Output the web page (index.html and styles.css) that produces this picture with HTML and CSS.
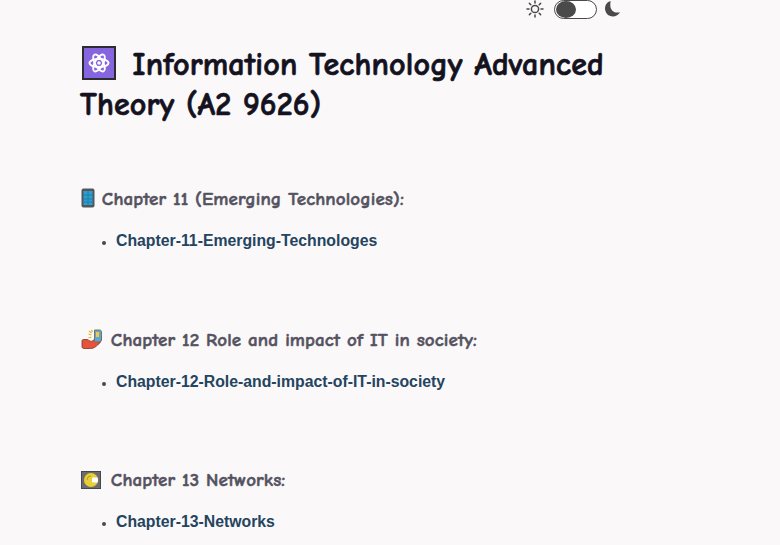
FILE: index.html
```html
<!DOCTYPE html>
<html lang="en">
<head>
<meta charset="UTF-8">
<meta name="viewport" content="width=device-width, initial-scale=1.0">
<title>Information Technology Advanced Theory</title>
<link rel="stylesheet" href="styles.css">
</head>
<body>
    <main class="page">
        <div class="theme-switch">
            <svg class="sun" width="18" height="18" viewBox="0 0 18 18" fill="none" stroke="#4a4a4a" stroke-width="1.5" stroke-linecap="round">
                <circle cx="9" cy="9" r="3.6"/>
                <path d="M9 1v2M9 15v2M1 9h2M15 9h2M3.4 3.4l1.4 1.4M13.2 13.2l1.4 1.4M3.4 14.6l1.4-1.4M13.2 4.8l1.4-1.4"/>
            </svg>
            <span class="toggle"><span class="knob"></span></span>
            <svg class="moon" width="17" height="18" viewBox="0 0 17 18">
                <path fill="#4a4a4a" d="M6.6 1C3.2 2 1 4.900 1 8.500c0 4.400 3.500 8 7.900 8 3 0 5.700-1.700 7.100-4.300-.8.300-1.600.4-2.400.4-4.200 0-7.300-3.100-7.300-7.200 0-1.600.1-3 .3-4.400z"/>
            </svg>
        </div>

        <h1 class="title">
            <svg class="emoji-title" width="34" height="34" viewBox="0 0 34 34">
                <rect x="1" y="1" width="32" height="32" fill="#8566de" stroke="#2c2c33" stroke-width="2"/>
                <g fill="none" stroke="#fff" stroke-width="1.900">
                    <ellipse cx="17" cy="17" rx="9.500" ry="4"/>
                    <ellipse cx="17" cy="17" rx="9.500" ry="4" transform="rotate(60 17 17)"/>
                    <ellipse cx="17" cy="17" rx="9.500" ry="4" transform="rotate(120 17 17)"/>
                </g>
                <circle cx="17" cy="17" r="1.800" fill="#fff"/>
            </svg>
            Information Technology Advanced Theory (A2 9626)
        </h1>

        <section class="chapter chapter-first">
            <h3 class="chapter-title">
                <svg class="emoji" width="14" height="20" viewBox="0 0 14 20">
                    <rect x="0.500" y="0.500" width="13" height="19" rx="2" fill="#55555b"/>
                    <rect x="2.500" y="3" width="9" height="14" fill="#2b9fd0"/>
                    <path d="M2.500 7h9M2.500 11h9M2.500 14h9M7 3v14" stroke="#1d7aa6" stroke-width="0.800"/>
                </svg>
                Chapter 11 (Emerging Technologies):
            </h3>
            <ul class="links">
                <li><a href="#">Chapter-11-Emerging-Technologes</a></li>
            </ul>
        </section>

        <section class="chapter">
            <h3 class="chapter-title">
                <svg class="emoji emoji-hand" width="22" height="20" viewBox="0 0 22 20">
                    <path d="M1 12c0-1 .7-1.500 1.500-1.500h4c1 0 1 .8 1.500 1.200 2 1 3.500.5 4.500-.7l4-1 4-2c.2 4-1.500 6.500-4 8-2 2-4 3.500-7 3.500H3c-1.300 0-2-.8-2-2z" fill="#e8523a" stroke="#6b3a2a" stroke-width="0.800"/>
                    <path d="M13.500 1h5c1.200 0 2 .8 2 2v7c0 1.500-1 3-2.500 3h-3c-1 0-1.500-.5-1.500-1.500z" fill="#5aa7d8" stroke="#7a6a3c" stroke-width="0.900"/>
                    <path d="M15 3h3v5h-3z" fill="#f2c84b"/>
                    <path d="M8 2l2.500 2M7.500 5l3 1M7.500 9l3-1M10.500 1l1 2" stroke="#e0b92e" stroke-width="1.300"/>
                </svg>
                Chapter 12 Role and impact of IT in society:
            </h3>
            <ul class="links">
                <li><a href="#">Chapter-12-Role-and-impact-of-IT-in-society</a></li>
            </ul>
        </section>

        <section class="chapter">
            <h3 class="chapter-title">
                <svg class="emoji emoji-disc" width="20" height="18" viewBox="0 0 20 18">
                    <rect x="0.500" y="0.500" width="19" height="17" fill="#6c6c70" stroke="#47474b"/>
                    <circle cx="10" cy="9" r="7" fill="#e8cf36"/>
                    <path d="M6 9a4 4 0 0 1 4-4" fill="none" stroke="#b79f1c"/>
                    <rect x="11" y="6.500" width="6" height="5" rx="1" fill="#fff"/>
                </svg>
                Chapter 13 Networks:
            </h3>
            <ul class="links">
                <li><a href="#">Chapter-13-Networks</a></li>
            </ul>
        </section>
    </main>
</body>
</html>
```

FILE: styles.css
```css
html, body {
    height: 100%;
    overflow: hidden;
}
body {
    margin: 0;
    background-color: #faf8f9;
    font-family: "Liberation Sans", Arial, sans-serif;
}
.page {
    width: 541px;
    margin-left: 80px;
}
.theme-switch {
    display: flex;
    justify-content: flex-end;
    align-items: center;
    gap: 7px;
    height: 18px;
}
.sun {
    margin-right: 3px;
}
.toggle {
    display: block;
    box-sizing: border-box;
    width: 43px;
    height: 19px;
    padding: 0 0 0 1px;
    border: 1px solid #4a4a4a;
    border-radius: 10px;
    background-color: #fff;
}
.knob {
    display: block;
    width: 20px;
    height: 17px;
    border-radius: 50%;
    background-color: #4a4a4a;
}
.title {
    margin: 27px 0 0;
    font-family: "Comic Sans MS", "Comic Neue", "DejaVu Sans", sans-serif;
    font-size: 32px;
    font-weight: 700;
    line-height: 40px;
    letter-spacing: 0.15px;
    -webkit-text-stroke: 0.7px #14121f;
    color: #14121f;
}
.emoji-title {
    vertical-align: -5px;
    margin-left: 2px;
    margin-right: 5px;
}
.chapter {
    margin-top: 74.5px;
}
.chapter-first {
    margin-top: 62px;
}
.chapter-title {
    margin: 0;
    font-family: "Comic Sans MS", "Comic Neue", "DejaVu Sans", sans-serif;
    font-size: 19px;
    font-weight: 700;
    line-height: 24px;
    letter-spacing: 0.1px;
    -webkit-text-stroke: 0.5px #55525f;
    color: #55525f;
}
.emoji {
    vertical-align: -3px;
    margin-left: 1px;
}
.emoji-hand {
    margin-right: 1px;
}
.emoji-disc {
    margin-right: 3px;
}
.links {
    margin: 18px 0 0;
    padding-left: 36px;
    font-size: 15.8px;
    line-height: 24px;
    color: #4a4a4a;
}
.links li::marker {
    font-size: 12px;
}
.links a {
    font-weight: 700;
    color: #24445f;
    text-decoration: none;
}
```
